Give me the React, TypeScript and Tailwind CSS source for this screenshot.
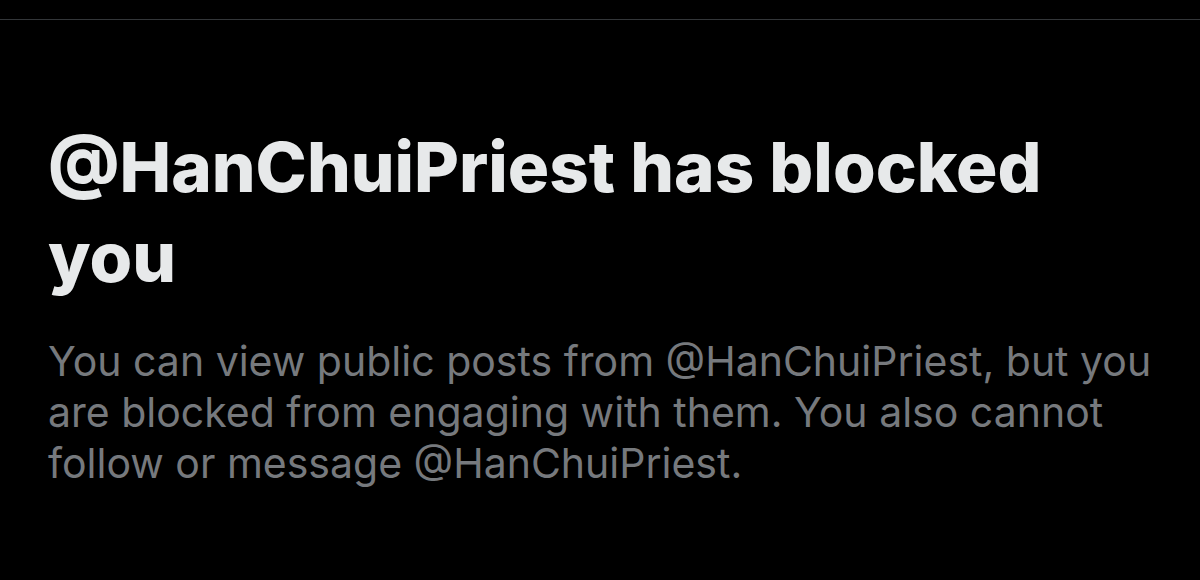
export default function App() {
  return (
    <div className="w-[1200px] h-[580px] bg-black overflow-hidden" style={{ fontFamily: "Inter, 'Liberation Sans', sans-serif" }}>
      <div className="h-[19px]" />
      <div className="border-t border-[#333639]" />
      <div className="pl-[48px] pr-[20px]">
        <h1 className="mt-[102px] text-[69px] leading-[90px] font-extrabold text-[#e7e9ea] whitespace-nowrap">
          @HanChuiPriest has blocked
          <br />
          you
        </h1>
        <p className="mt-[34px] text-[41px] leading-[51px] text-[#76797d] whitespace-nowrap">
          You can view public posts from @HanChuiPriest, but you
          <br />
          are blocked from engaging with them. You also cannot
          <br />
          follow or message @HanChuiPriest.
        </p>
      </div>
    </div>
  );
}
